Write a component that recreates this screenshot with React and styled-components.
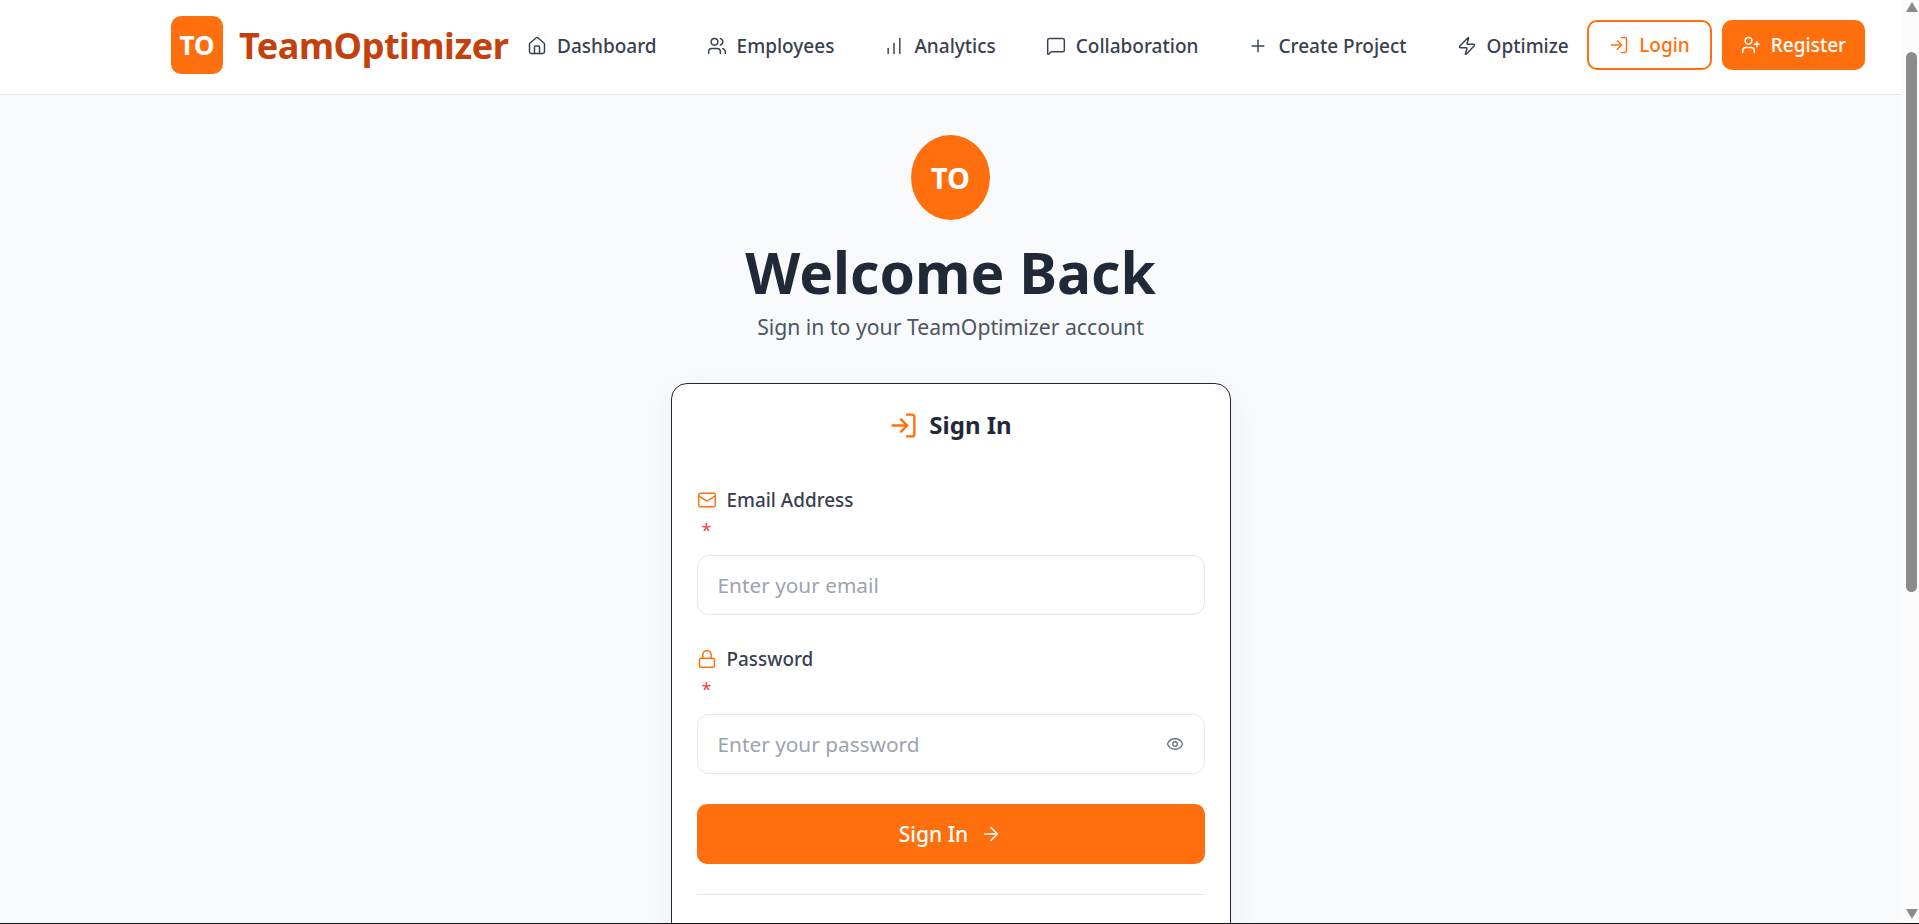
import styled, { createGlobalStyle } from "styled-components";
import {
    ArrowRight,
    ChartNoAxesColumnIncreasing,
    Eye,
    House,
    Lock,
    LogIn,
    Mail,
    MessageSquare,
    Plus,
    UserPlus,
    Users,
    Zap,
} from "lucide-react";

const orange = "#ff6f0d";

const GlobalStyle = createGlobalStyle`
    html {
        overflow: hidden;
    }
    body {
        margin: 0;
        padding-right: 18px;
        background-color: #f9fafb;
        font-family: "Noto Sans", "Open Sans", sans-serif;
        color: #374151;
    }
`;

const Header = styled.header`
    box-sizing: border-box;
    display: flex;
    align-items: center;
    height: 95px;
    padding: 0 36px 4px 171px;
    background-color: #fff;
    border-bottom: 1px solid #e5e7eb;
`;

const Brand = styled.div`
    display: flex;
    align-items: center;
    gap: 16px;
    width: 336px;
    flex-shrink: 0;
`;

const BrandMark = styled.div`
    display: flex;
    align-items: center;
    justify-content: center;
    flex-shrink: 0;
    width: 52px;
    height: 58px;
    border-radius: 10px;
    background-color: ${orange};
    color: #fff;
    font-size: 26px;
    font-weight: 700;
`;

const BrandName = styled.span`
    color: #c2410c;
    font-size: 36px;
    font-weight: 700;
    letter-spacing: -0.45px;
    white-space: nowrap;
`;

const Nav = styled.nav`
    display: flex;
    align-items: center;
    gap: 50px;
    margin: 2px 0 0 20px;
`;

const NavItem = styled.a`
    display: flex;
    align-items: center;
    gap: 10px;
    color: #374151;
    font-size: 19px;
    font-weight: 500;
    white-space: nowrap;
`;

const Actions = styled.div`
    display: flex;
    align-items: center;
    gap: 10px;
    margin-left: auto;
`;

const HeaderButton = styled.button`
    display: flex;
    align-items: center;
    justify-content: center;
    gap: 10px;
    width: ${({ $wide }) => ($wide ? "143px" : "125px")};
    height: 50px;
    border: 2px solid ${orange};
    border-radius: 10px;
    background-color: ${({ $filled }) => ($filled ? orange : "#fff")};
    color: ${({ $filled }) => ($filled ? "#fff" : orange)};
    font-family: inherit;
    font-size: 19px;
    font-weight: 500;
`;

const Main = styled.main`
    display: flex;
    flex-direction: column;
    align-items: center;
    padding-top: 40px;
    padding-bottom: 80px;
`;

const Avatar = styled.div`
    display: flex;
    align-items: center;
    justify-content: center;
    width: 79px;
    height: 85px;
    border-radius: 50%;
    background-color: ${orange};
    color: #fff;
    font-size: 29px;
    font-weight: 700;
`;

const Title = styled.h1`
    margin: 12px 0 0;
    color: #1f2937;
    font-size: 56.9px;
    font-weight: 700;
    line-height: 81px;
`;

const Subtitle = styled.p`
    margin: 0 0 42px;
    color: #4b5563;
    font-size: 21.2px;
    line-height: 28px;
`;

const Card = styled.section`
    box-sizing: border-box;
    width: 560px;
    padding: 23px 25px 32px;
    background-color: #fff;
    border: 1px solid #1f2937;
    border-radius: 16px;
    box-shadow: 0 10px 30px rgba(0, 0, 0, 0.05);
`;

const CardTitle = styled.h2`
    display: flex;
    align-items: center;
    justify-content: center;
    gap: 11px;
    margin: 0 0 43px;
    color: #1f2937;
    font-size: 24px;
    font-weight: 700;
    line-height: 36px;

    svg {
        color: ${orange};
    }
`;

const Field = styled.div`
    margin-bottom: 30px;
`;

const Label = styled.label`
    display: flex;
    align-items: center;
    gap: 10px;
    margin-top: 3px;
    color: #374151;
    font-size: 18.9px;
    font-weight: 500;
    line-height: 28px;

    svg {
        color: ${orange};
    }
`;

const Required = styled.div`
    height: 39px;
    margin: 2px 0 0 5px;
    color: #ef4444;
    font-size: 18px;
    line-height: 28px;
`;

const InputWrap = styled.div`
    position: relative;
`;

const Input = styled.input`
    box-sizing: border-box;
    display: block;
    width: 100%;
    height: 60px;
    padding: 0 20px;
    background-color: #fff;
    border: 1px solid #e5e7eb;
    border-radius: 12px;
    outline: none;
    font-family: inherit;
    font-size: 20.8px;

    &::placeholder {
        color: #9ca3af;
    }
`;

const EyeButton = styled.span`
    position: absolute;
    top: 21px;
    right: 21px;
    display: flex;
    color: #6b7280;
`;

const SubmitButton = styled.button`
    display: flex;
    align-items: center;
    justify-content: center;
    gap: 12px;
    width: 100%;
    height: 60px;
    border: none;
    border-radius: 10px;
    background-color: ${orange};
    color: #fff;
    font-family: inherit;
    font-size: 21px;
    font-weight: 500;
`;

const Divider = styled.hr`
    margin: 30px 0 28px;
    border: none;
    border-top: 1px solid #e5e7eb;
`;

// the vertical scrollbar of the window, drawn over the page edge
const Scrollbar = styled.aside`
    position: fixed;
    top: 0;
    right: 0;
    bottom: 0;
    box-sizing: border-box;
    display: flex;
    flex-direction: column;
    align-items: center;
    width: 18px;
    padding: 2px 0 5px 3px;
    background-color: #fcfcfc;
`;

const ScrollArrow = styled.div`
    width: 0;
    height: 0;
    border-left: 6px solid transparent;
    border-right: 6px solid transparent;
    border-${({ $down }) => ($down ? "top" : "bottom")}: 10px solid #8b8b8b;
    margin-top: ${({ $down }) => ($down ? "auto" : "0")};
`;

const ScrollThumb = styled.div`
    width: 11px;
    height: 540px;
    margin-top: 40px;
    border-radius: 6px;
    background-color: #8b8b8b;
`;

// dark line along the bottom edge of the window
const WindowEdge = styled.div`
    position: fixed;
    left: 0;
    right: 0;
    bottom: 0;
    height: 1px;
    background-color: #111;
`;

const navItems = [
    { label: "Dashboard", icon: House },
    { label: "Employees", icon: Users },
    { label: "Analytics", icon: ChartNoAxesColumnIncreasing },
    { label: "Collaboration", icon: MessageSquare },
    { label: "Create Project", icon: Plus },
    { label: "Optimize", icon: Zap },
];

const App = () => {
    return (
        <>
            <GlobalStyle />
            <Header>
                <Brand>
                    <BrandMark>TO</BrandMark>
                    <BrandName>TeamOptimizer</BrandName>
                </Brand>
                <Nav>
                    {navItems.map(({ label, icon: Icon }) => (
                        <NavItem key={label}>
                            <Icon size={20} strokeWidth={1.75} />
                            {label}
                        </NavItem>
                    ))}
                </Nav>
                <Actions>
                    <HeaderButton>
                        <LogIn size={20} strokeWidth={1.75} />
                        Login
                    </HeaderButton>
                    <HeaderButton $filled $wide>
                        <UserPlus size={20} strokeWidth={1.75} />
                        Register
                    </HeaderButton>
                </Actions>
            </Header>
            <Main>
                <Avatar>TO</Avatar>
                <Title>Welcome Back</Title>
                <Subtitle>Sign in to your TeamOptimizer account</Subtitle>
                <Card>
                    <CardTitle>
                        <LogIn size={29} strokeWidth={2} />
                        Sign In
                    </CardTitle>
                    <Field>
                        <Label>
                            <Mail size={20} strokeWidth={1.75} />
                            Email Address
                        </Label>
                        <Required>*</Required>
                        <Input placeholder="Enter your email" />
                    </Field>
                    <Field>
                        <Label>
                            <Lock size={20} strokeWidth={1.75} />
                            Password
                        </Label>
                        <Required>*</Required>
                        <InputWrap>
                            <Input placeholder="Enter your password" />
                            <EyeButton>
                                <Eye size={18} strokeWidth={1.75} />
                            </EyeButton>
                        </InputWrap>
                    </Field>
                    <SubmitButton>
                        Sign In
                        <ArrowRight size={22} strokeWidth={1.75} />
                    </SubmitButton>
                    <Divider />
                </Card>
            </Main>
            <Scrollbar>
                <ScrollArrow />
                <ScrollThumb />
                <ScrollArrow $down />
            </Scrollbar>
            <WindowEdge />
        </>
    );
};

export default App;
